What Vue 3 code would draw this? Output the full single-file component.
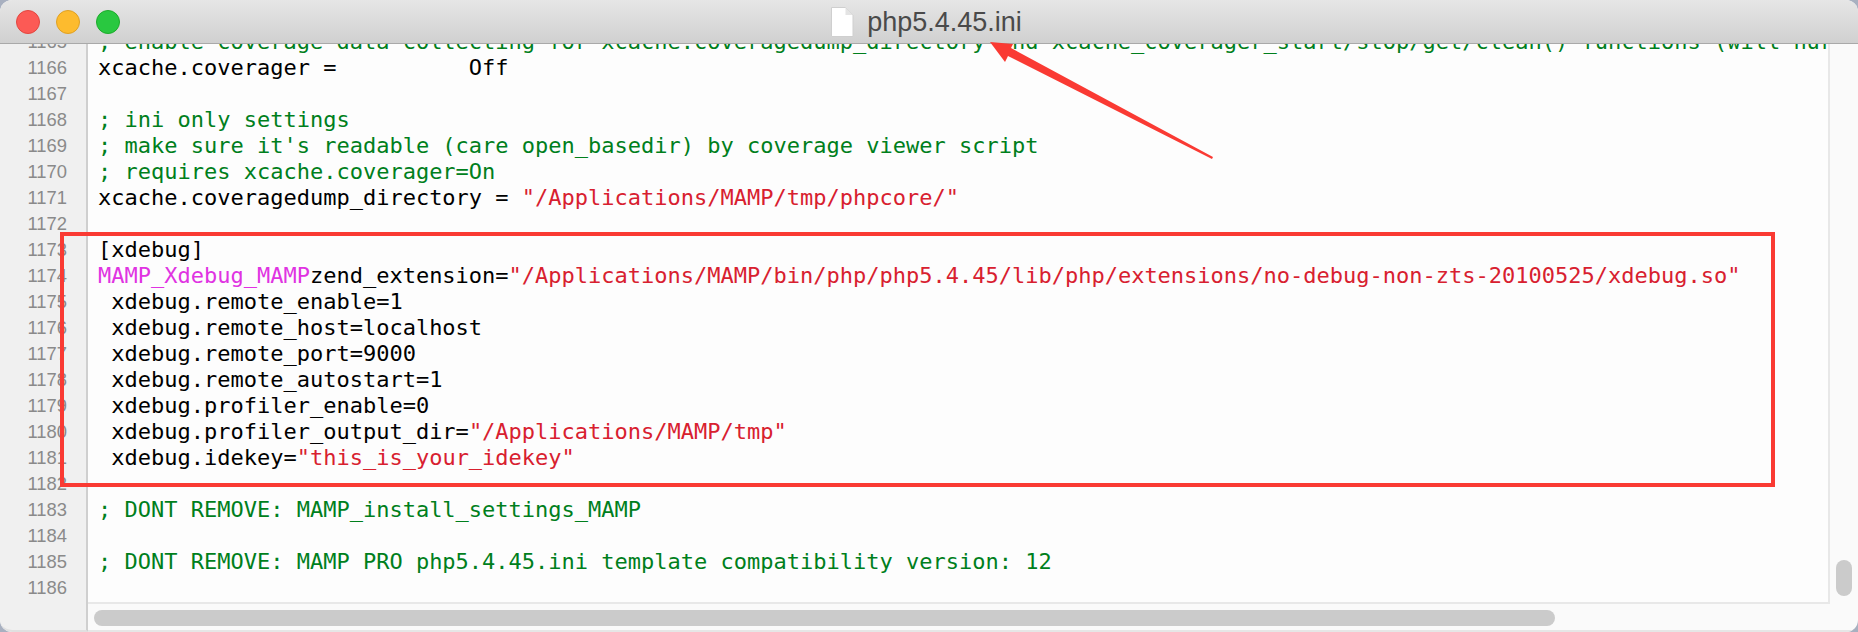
<script setup>
const lines = [
  { n: 1165, parts: [['c', '; enable coverage data collecting for xcache.coveragedump_directory and xcache_coverager_start/stop/get/clean() functions (will hurt executor performance)']] },
  { n: 1166, parts: [['k', 'xcache.coverager =          Off']] },
  { n: 1167, parts: [] },
  { n: 1168, parts: [['c', '; ini only settings']] },
  { n: 1169, parts: [['c', "; make sure it's readable (care open_basedir) by coverage viewer script"]] },
  { n: 1170, parts: [['c', '; requires xcache.coverager=On']] },
  { n: 1171, parts: [['k', 'xcache.coveragedump_directory = '], ['s', '"/Applications/MAMP/tmp/phpcore/"']] },
  { n: 1172, parts: [] },
  { n: 1173, parts: [['k', '[xdebug]']] },
  { n: 1174, parts: [['m', 'MAMP_Xdebug_MAMP'], ['k', 'zend_extension='], ['s', '"/Applications/MAMP/bin/php/php5.4.45/lib/php/extensions/no-debug-non-zts-20100525/xdebug.so"']] },
  { n: 1175, parts: [['k', ' xdebug.remote_enable=1']] },
  { n: 1176, parts: [['k', ' xdebug.remote_host=localhost']] },
  { n: 1177, parts: [['k', ' xdebug.remote_port=9000']] },
  { n: 1178, parts: [['k', ' xdebug.remote_autostart=1']] },
  { n: 1179, parts: [['k', ' xdebug.profiler_enable=0']] },
  { n: 1180, parts: [['k', ' xdebug.profiler_output_dir='], ['s', '"/Applications/MAMP/tmp"']] },
  { n: 1181, parts: [['k', ' xdebug.idekey='], ['s', '"this_is_your_idekey"']] },
  { n: 1182, parts: [] },
  { n: 1183, parts: [['c', '; DONT REMOVE: MAMP_install_settings_MAMP']] },
  { n: 1184, parts: [] },
  { n: 1185, parts: [['c', '; DONT REMOVE: MAMP PRO php5.4.45.ini template compatibility version: 12']] },
  { n: 1186, parts: [] }
]
</script>

<template>
  <div class="window">
    <header class="titlebar">
      <div class="lights">
        <span class="light red"></span>
        <span class="light yellow"></span>
        <span class="light green"></span>
      </div>
      <div class="title">
        <svg class="doc" width="24" height="30" viewBox="0 0 24 30">
          <path d="M1.5 0.5H15.5L23 8V29.5H1.5Z" fill="#fff" stroke="#cfcfcf" />
          <path d="M15.5 0.5V8H23Z" fill="#e4e4e4" />
        </svg>
        <span class="name">php5.4.45.ini</span>
      </div>
    </header>
    <div class="body">
      <div class="gutter">
        <div class="scroll">
          <div v-for="l in lines" :key="l.n" class="num">{{ l.n }}</div>
        </div>
      </div>
      <div class="pane">
        <div class="main">
          <div class="editor">
            <div class="scroll">
              <div v-for="l in lines" :key="l.n" class="line"><span v-for="(p, i) in l.parts" :key="i" :class="p[0]">{{ p[1] }}</span></div>
            </div>
          </div>
          <div class="vbar"><span class="vthumb"></span></div>
        </div>
        <div class="hbar"><span class="hthumb"></span></div>
      </div>
    </div>
    <div class="box"></div>
    <svg class="arrow" width="1858" height="632" viewBox="0 0 1858 632">
      <path d="M990 42 L1013 44 L1011 48 L1213 157 L1212 159 L1008 56 L1005 62 Z" fill="#fa3a33" />
    </svg>
  </div>
</template>

<style scoped>
.window {
  position: relative;
  width: 1858px;
  height: 632px;
  display: flex;
  flex-direction: column;
  overflow: hidden;
  background: #fafafa;
  border-radius: 12px;
}
.titlebar {
  position: relative;
  z-index: 1;
  flex: none;
  height: 44px;
  box-sizing: border-box;
  display: flex;
  align-items: center;
  justify-content: center;
  background: linear-gradient(#e6e6e6, #d0d0d0);
  border-bottom: 1px solid #a9a9a9;
}
.lights {
  position: absolute;
  left: 16px;
  top: 10px;
  display: flex;
  gap: 16px;
}
.light {
  width: 24px;
  height: 24px;
  border-radius: 50%;
  box-sizing: border-box;
}
.red { background: #fc5a55; border: 1px solid #e2463f; }
.yellow { background: #fdbb2e; border: 1px solid #dfa023; }
.green { background: #29c840; border: 1px solid #1dab2b; }
.title {
  display: flex;
  align-items: center;
  gap: 13px;
  margin-right: 6px;
}
.doc { display: block; }
.name {
  font: 27px/30px "Liberation Sans", Arial, sans-serif;
  color: #4a4a4a;
}
.body {
  flex: 1;
  min-height: 0;
  display: flex;
}
.gutter {
  flex: none;
  width: 88px;
  box-sizing: border-box;
  overflow: hidden;
  background: #f0f0f0;
  border-right: 2px solid #cfcfcf;
  border-bottom: 2px solid #e0e0e0;
  border-bottom-left-radius: 12px;
}
.scroll { margin-top: -15px; }
.num {
  height: 26px;
  padding-right: 19px;
  text-align: right;
  font: 18.4px/26px "Liberation Sans", Arial, sans-serif;
  color: #8a8a8a;
}
.pane {
  flex: 1;
  min-width: 0;
  display: flex;
  flex-direction: column;
}
.main {
  flex: 1;
  min-height: 0;
  display: flex;
}
.editor {
  flex: 1;
  min-width: 0;
  overflow: hidden;
  background: #fdfdfd;
  border-right: 2px solid #e8e8e8;
  border-bottom: 2px solid #e8e8e8;
  padding-left: 10px;
}
.line {
  height: 26px;
  white-space: pre;
  font: 22px/26px "DejaVu Sans Mono", monospace;
}
.c { color: #007f1c; }
.k { color: #000; }
.s { color: #d8202f; }
.m { color: #e033e2; }
.vbar {
  flex: none;
  width: 28px;
  position: relative;
}
.vthumb {
  position: absolute;
  right: 6px;
  bottom: 8px;
  width: 16px;
  height: 36px;
  border-radius: 8px;
  background: #cbcbcb;
}
.hbar {
  flex: none;
  height: 28px;
  box-sizing: border-box;
  padding: 6px 0 0 6px;
  border-bottom: 2px solid #e6e6e6;
}
.hthumb {
  display: block;
  width: 1461px;
  height: 16px;
  border-radius: 8px;
  background: #cbcbcb;
}
.box {
  position: absolute;
  z-index: 2;
  left: 60px;
  top: 232px;
  width: 1715px;
  height: 255px;
  box-sizing: border-box;
  border: 4px solid #fa3a33;
}
.arrow {
  position: absolute;
  z-index: 2;
  left: 0;
  top: 0;
  pointer-events: none;
}
</style>

<style>
html, body { margin: 0; background: #a8b0c0; }
</style>
